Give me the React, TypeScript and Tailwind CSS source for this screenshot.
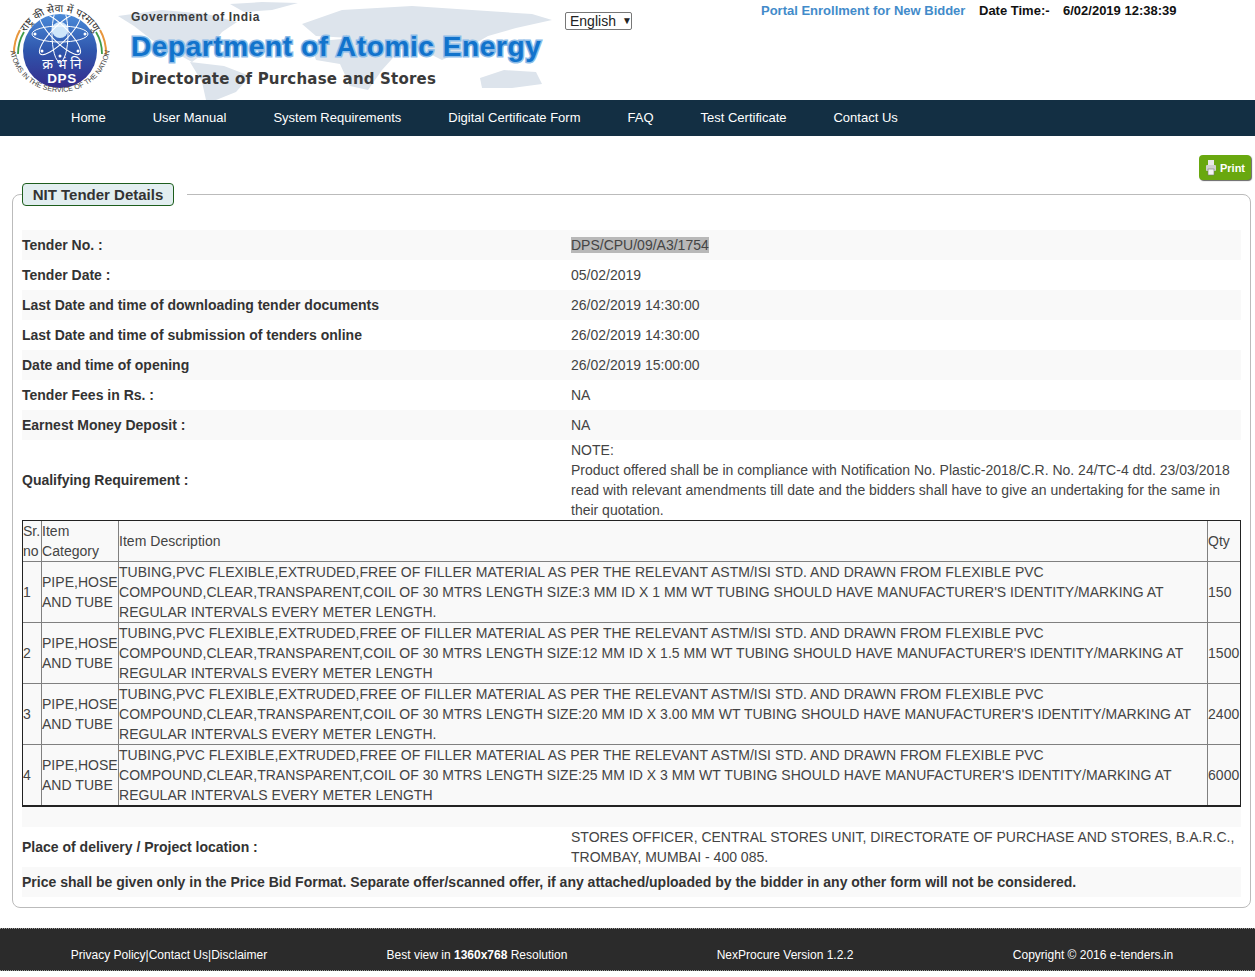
const navItems = ['Home', 'User Manual', 'System Requirements', 'Digital Certificate Form', 'FAQ', 'Test Certificate', 'Contact Us'];

const tenderRows = [
  { label: 'Tender Date :', value: '05/02/2019', shade: false },
  { label: 'Last Date and time of downloading tender documents', value: '26/02/2019 14:30:00', shade: true },
  { label: 'Last Date and time of submission of tenders online', value: '26/02/2019 14:30:00', shade: false },
  { label: 'Date and time of opening', value: '26/02/2019 15:00:00', shade: true },
  { label: 'Tender Fees in Rs. :', value: 'NA', shade: false },
  { label: 'Earnest Money Deposit :', value: 'NA', shade: true },
];

const items = [
  { no: 1, size: '3 MM ID X 1 MM WT', end: '.', qty: 150 },
  { no: 2, size: '12 MM ID X 1.5 MM WT', end: '', qty: 1500 },
  { no: 3, size: '20 MM ID X 3.00 MM WT', end: '.', qty: 2400 },
  { no: 4, size: '25 MM ID X 3 MM WT', end: '', qty: 6000 },
];

function Logo() {
  return (
    <svg width="120" height="100" viewBox="0 0 120 100" className="mr-[-8px] shrink-0">
      <defs>
        <linearGradient id="disc" x1="0" y1="0" x2="0" y2="1">
          <stop offset="0" stopColor="#4a8ad8" />
          <stop offset="0.5" stopColor="#2f55ac" />
          <stop offset="1" stopColor="#352c8c" />
        </linearGradient>
        <path id="topArc" d="M21 51 A39 39 0 0 1 99 51" />
        <path id="botArc" d="M10 45 A50 47 0 0 0 110 45" />
        <clipPath id="discClip">
          <circle cx="60" cy="51" r="37" />
        </clipPath>
      </defs>
      <circle cx="60" cy="51" r="37" fill="url(#disc)" />
      <circle cx="60" cy="30" r="8" fill="#cfe6fa" />
      <g fill="none" stroke="#fff" strokeWidth="1" clipPath="url(#discClip)">
        <ellipse cx="60" cy="34" rx="8" ry="28" />
        <ellipse cx="60" cy="34" rx="8" ry="28" transform="rotate(45 60 34)" />
        <ellipse cx="60" cy="34" rx="8" ry="28" transform="rotate(90 60 34)" />
        <ellipse cx="60" cy="34" rx="8" ry="28" transform="rotate(135 60 34)" />
      </g>
      <g fill="#fff">
        <circle cx="35" cy="34" r="1.5" />
        <circle cx="85" cy="34" r="1.5" />
        <circle cx="42" cy="51" r="1.5" />
        <circle cx="78" cy="51" r="1.5" />
        <circle cx="60" cy="56" r="1.5" />
      </g>
      <path d="M14 54 A46 46 0 0 1 20 30" fill="none" stroke="#e8963c" strokeWidth="2" />
      <path d="M18 54 A42 42 0 0 1 24 32" fill="none" stroke="#3f9a4a" strokeWidth="1.8" />
      <path d="M106 54 A46 46 0 0 0 100 30" fill="none" stroke="#e8963c" strokeWidth="2" />
      <path d="M102 54 A42 42 0 0 0 96 32" fill="none" stroke="#3f9a4a" strokeWidth="1.8" />
      <text x="62" y="69" textAnchor="middle" fill="#fff" fontSize="14" fontFamily="'Noto Sans', 'DejaVu Sans', sans-serif">क्र भं नि</text>
      <text x="62" y="83" textAnchor="middle" fill="#fff" fontSize="13.5" fontWeight="700" letterSpacing="0.6" fontFamily="'Liberation Sans', sans-serif">DPS</text>
      <text fill="#333" fontSize="10.5" fontFamily="'Noto Sans', 'DejaVu Sans', sans-serif">
        <textPath href="#topArc" startOffset="50%" textAnchor="middle">राष्ट्र की सेवा में परमाणु</textPath>
      </text>
      <text fill="#444" fontSize="7.2" fontFamily="'Liberation Sans', sans-serif">
        <textPath href="#botArc" startOffset="50%" textAnchor="middle">ATOMS IN THE SERVICE OF THE NATION</textPath>
      </text>
    </svg>
  );
}

function WorldMap() {
  return (
    <svg width="440" height="100" viewBox="0 0 440 100" className="absolute left-0 top-0">
      <g fill="#dde4ec">
        <path d="M6 16 L50 10 L95 14 L125 22 L110 32 L96 50 L80 62 L62 52 L40 40 L22 26 Z" />
        <path d="M78 62 L112 66 L138 76 L124 92 L104 100 L94 100 L90 82 Z" />
        <path d="M118 4 L150 2 L186 3 L160 10 L132 12 Z" />
        <path d="M198 42 L240 38 L262 46 L288 50 L270 70 L256 90 L238 86 L228 64 L204 60 Z" />
        <path d="M190 24 L230 10 L300 6 L360 10 L420 14 L440 20 L404 28 L376 36 L352 50 L330 60 L306 48 L272 50 L238 38 L204 36 Z" />
        <path d="M368 78 L392 70 L424 72 L430 84 L400 88 L370 88 Z" />
      </g>
    </svg>
  );
}

function Brand() {
  return (
    <div className="relative h-full w-[440px] shrink-0">
      <WorldMap />
      <div className="relative pl-[19px]">
        <div className="pt-[10px] text-[12px] leading-[15px] font-bold tracking-[0.65px] text-[#3a3a3a]">
          Government of India
        </div>
        <div className="mt-[6px] text-[28px] leading-[32px] font-bold tracking-[0.6px] whitespace-nowrap text-[#1173cc] [-webkit-text-stroke:3px_#8cbce8] [paint-order:stroke_fill]">
          Department of Atomic Energy
        </div>
        <div className="mt-[6px] text-[15px] leading-[20px] font-bold tracking-[0.2px] text-[#3a3a3a] font-['DejaVu_Sans',sans-serif]">
          Directorate of Purchase and Stores
        </div>
      </div>
    </div>
  );
}

function PrintIcon() {
  return (
    <svg width="12" height="17" viewBox="0 0 12 17">
      <rect x="3" y="1" width="6" height="5" fill="#e8e8e8" />
      <rect x="1" y="6" width="10" height="6" rx="1" fill="#d0d0d0" />
      <rect x="3" y="10" width="6" height="6" fill="#f4f4f4" stroke="#777" strokeWidth="0.6" />
    </svg>
  );
}

function Row({ label, value, shade }: { label: string; value: string; shade: boolean }) {
  return (
    <div className={shade ? 'flex h-[30px] items-center bg-[#f9f9f9]' : 'flex h-[30px] items-center'}>
      <div className="w-[549px] font-bold text-[#333]">{label}</div>
      <div className="flex-1 text-[#444]">{value}</div>
    </div>
  );
}

export default function App() {
  return (
    <div className="min-h-[977px] bg-white text-[14px] leading-[20px] font-['Liberation_Sans',Arial,sans-serif]">
      <header className="flex h-[100px]">
        <Logo />
        <Brand />
        <div className="w-[13px] shrink-0" />
        <div className="pt-[12px]">
          <div className="flex h-[18px] w-[67px] items-center gap-[6px] rounded-[2px] border border-[#777] pb-[1px] pl-[4px] text-[14px] text-[#222]">
            <span>English</span>
            <span className="text-[10px] leading-none">▼</span>
          </div>
        </div>
        <div className="ml-[129px] flex h-[20px] items-center pt-[2px] text-[13px] font-bold whitespace-nowrap">
          <span className="w-[218px] text-[#428bca]">Portal Enrollment for New Bidder</span>
          <span className="w-[84px] text-[#111]">Date Time:-</span>
          <span className="text-[#111]">6/02/2019 12:38:39</span>
        </div>
      </header>

      <nav className="flex h-[36px] items-center gap-[47px] bg-[#132f43] pl-[71px] text-[13px] text-white">
        {navItems.map((item) => (
          <a key={item}>{item}</a>
        ))}
      </nav>

      <main className="pt-[19px]">
        <div className="flex justify-end pr-[4px]">
          <button className="flex h-[25px] w-[52px] items-center justify-center gap-[3px] rounded-[4px] bg-[#69a80f] text-[11px] font-bold text-white shadow-[1px_1px_1px_#666]">
            <PrintIcon />
            Print
          </button>
        </div>

        <fieldset className="mt-[3px] mr-[4px] ml-[12px] rounded-[8px] border border-[#bbb] px-[9px] pb-[10px]">
          <legend className="pr-[13px]">
            <div className="h-[23px] w-[152px] rounded-[4px] border border-[#1d5e1d] bg-[#e2eef0] text-center text-[15px] leading-[21px] font-bold text-[#333]">
              NIT Tender Details
            </div>
          </legend>

          <div className="pt-[24px]">
            <div className="flex h-[30px] items-center bg-[#f9f9f9]">
              <div className="w-[549px] font-bold text-[#333]">Tender No. :</div>
              <div className="flex-1 text-[#444]"><span className="bg-[#b8b8b8]">DPS/CPU/09/A3/1754</span></div>
            </div>
            {tenderRows.map((row) => (
              <Row key={row.label} {...row} />
            ))}
            <div className="flex h-[80px] items-center">
              <div className="w-[549px] font-bold text-[#333]">Qualifying Requirement :</div>
              <div className="flex-1 pr-[8px] text-[#444]">
                NOTE:
                <br />
                Product offered shall be in compliance with Notification No. Plastic-2018/C.R. No. 24/TC-4 dtd. 23/03/2018 read with relevant amendments till date and the bidders shall have to give an undertaking for the same in their quotation.
              </div>
            </div>

            <table className="w-[1219px] table-fixed border-separate border-spacing-0 border border-b-2 border-[#222] bg-[#f9f9f9] tracking-[0.03px] text-[#444]">
              <colgroup>
                <col className="w-[18px]" />
                <col className="w-[77px]" />
                <col className="w-[1089px]" />
                <col className="w-[33px]" />
              </colgroup>
              <thead>
                <tr className="h-[40px]">
                  <td>Sr. no</td>
                  <td className="border-l border-[#808080]">Item Category</td>
                  <td className="border-l border-[#808080]">Item Description</td>
                  <td className="border-l border-[#808080]">Qty</td>
                </tr>
              </thead>
              <tbody>
                {items.map((item) => (
                  <tr key={item.no} className="h-[61px]">
                    <td className="border-t border-[#808080]">{item.no}</td>
                    <td className="border-t border-l border-[#808080]">PIPE,HOSE AND TUBE</td>
                    <td className="border-t border-l border-[#808080]">
                      TUBING,PVC FLEXIBLE,EXTRUDED,FREE OF FILLER MATERIAL AS PER THE RELEVANT ASTM/ISI STD. AND DRAWN FROM FLEXIBLE PVC COMPOUND,CLEAR,TRANSPARENT,COIL OF 30 MTRS LENGTH SIZE:{item.size} TUBING SHOULD HAVE MANUFACTURER'S IDENTITY/MARKING AT REGULAR INTERVALS EVERY METER LENGTH{item.end}
                    </td>
                    <td className="border-t border-l border-[#808080]">{item.qty}</td>
                  </tr>
                ))}
              </tbody>
            </table>

            <div className="h-[20px] bg-[#f9f9f9]" />
            <div className="flex h-[40px] items-center">
              <div className="w-[549px] font-bold text-[#333]">Place of delivery / Project location :</div>
              <div className="flex-1 text-[#444]">
                STORES OFFICER, CENTRAL STORES UNIT, DIRECTORATE OF PURCHASE AND STORES, B.A.R.C., TROMBAY, MUMBAI - 400 085.
              </div>
            </div>
            <div className="flex h-[30px] items-center bg-[#f9f9f9] font-bold text-[#333]">
              Price shall be given only in the Price Bid Format. Separate offer/scanned offer, if any attached/uploaded by the bidder in any other form will not be considered.
            </div>
          </div>
        </fieldset>
      </main>

      <footer className="mt-[20px] grid h-[43px] grid-cols-[repeat(4,308px)] items-center border-y border-dotted border-[#999] bg-[#2b2b2b] pt-[10px] pl-[15px] text-center text-[12px] text-white">
        <div>Privacy Policy|Contact Us|Disclaimer</div>
        <div>Best view in <b>1360x768</b> Resolution</div>
        <div>NexProcure Version 1.2.2</div>
        <div>Copyright © 2016 e-tenders.in</div>
      </footer>
    </div>
  );
}
